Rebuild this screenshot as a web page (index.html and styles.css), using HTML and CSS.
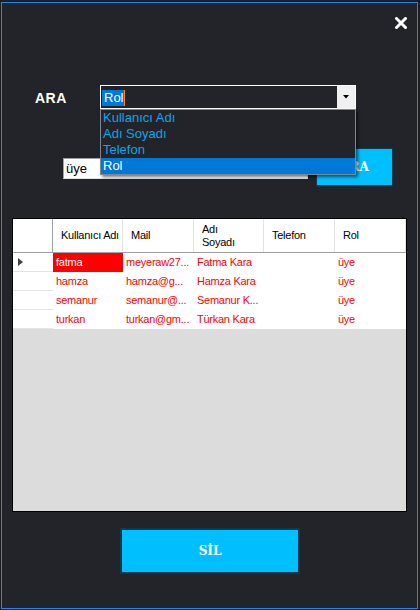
FILE: index.html
```html
<!DOCTYPE html>
<html lang="tr">
<head>
<meta charset="utf-8">
<title>Kullanıcı Ara</title>
<link rel="stylesheet" href="styles.css">
</head>
<body>
<div class="window">
  <div class="topbar">
    <button class="close" aria-label="Kapat">
      <svg width="12" height="12" viewBox="0 0 12 12"><path d="M1.5 1.5 L10.5 10.5 M10.5 1.5 L1.5 10.5" stroke="#fff" stroke-width="3" stroke-linecap="square" fill="none"/></svg>
    </button>
  </div>

  <div class="search-row">
    <span class="search-label">ARA</span>
    <div class="combo">
      <div class="combo-field"><span class="combo-value">Rol</span></div>
      <div class="combo-btn"><svg width="6" height="4" viewBox="0 0 6 4"><path d="M0 0 H6 L3 3.5 Z" fill="#000"/></svg></div>
      <ul class="combo-list">
        <li>Kullanıcı Adı</li>
        <li>Adı Soyadı</li>
        <li>Telefon</li>
        <li class="selected">Rol</li>
      </ul>
    </div>
  </div>

  <div class="filter-row">
    <div class="textbox">üye</div>
    <button class="btn btn-ara">ARA</button>
  </div>

  <div class="grid">
    <div class="grid-head">
      <div class="rh"></div>
      <div class="hc">Kullanıcı Adı</div>
      <div class="hc">Mail</div>
      <div class="hc two">Adı<br>Soyadı</div>
      <div class="hc">Telefon</div>
      <div class="hc">Rol</div>
    </div>
    <div class="grid-row current">
      <div class="rh"><span class="arrow"></span></div>
      <div class="dc sel">fatma</div>
      <div class="dc">meyeraw27...</div>
      <div class="dc">Fatma Kara</div>
      <div class="dc"></div>
      <div class="dc">üye</div>
    </div>
    <div class="grid-row">
      <div class="rh"></div>
      <div class="dc">hamza</div>
      <div class="dc">hamza@g...</div>
      <div class="dc">Hamza Kara</div>
      <div class="dc"></div>
      <div class="dc">üye</div>
    </div>
    <div class="grid-row">
      <div class="rh"></div>
      <div class="dc">semanur</div>
      <div class="dc">semanur@...</div>
      <div class="dc">Semanur K...</div>
      <div class="dc"></div>
      <div class="dc">üye</div>
    </div>
    <div class="grid-row">
      <div class="rh"></div>
      <div class="dc">turkan</div>
      <div class="dc">turkan@gm...</div>
      <div class="dc">Türkan Kara</div>
      <div class="dc"></div>
      <div class="dc">üye</div>
    </div>
  </div>

  <div class="bottom">
    <button class="btn btn-sil">SİL</button>
  </div>
</div>
</body>
</html>
```

FILE: styles.css
```css
* { box-sizing: border-box; }

html, body {
  margin: 0;
  padding: 0;
  background: #1d1e22;
  font-family: "Liberation Sans", Arial, sans-serif;
}

.window {
  margin: 2px 0 0 1px;
  width: 417px;
  height: 607px;
  border: 1px solid #1e88f0;
  background: #222429;
}

.topbar {
  height: 40px;
  display: flex;
  justify-content: flex-end;
  padding: 14px 10px 0 0;
}

.close {
  width: 12px;
  height: 12px;
  padding: 0;
  border: 0;
  background: none;
  display: block;
}
.close svg { display: block; }

.search-row {
  margin-top: 42px;
  padding-left: 33px;
  display: flex;
  align-items: center;
  height: 24px;
}

.search-label {
  width: 65px;
  color: #fff;
  font-weight: bold;
  font-size: 14px;
  letter-spacing: 0.5px;
  padding-top: 2px;
}

.combo {
  position: relative;
  width: 256px;
  height: 24px;
  border: 1px solid #ffffff;
  display: flex;
  background: #222429;
}

.combo-field {
  flex: 1;
  padding: 2px 0 0 1px;
}

.combo-value {
  display: inline-block;
  background: #0078d7;
  color: #fff;
  font-size: 13px;
  line-height: 16px;
  padding: 0 0 0 2px;
  border-right: 1px solid #ff8c1a;
}

.combo-btn {
  width: 18px;
  background: #f0f0f0;
  display: flex;
  align-items: center;
  justify-content: center;
}
.combo-btn svg { display: block; }

.combo-list {
  position: absolute;
  top: 23px;
  left: -1px;
  width: 256px;
  height: 66px;
  margin: 0;
  padding: 0;
  list-style: none;
  border: 1px solid #82868e;
  background: #222429;
  box-shadow: 2px 2px 3px rgba(0, 0, 0, 0.55);
  z-index: 5;
}

.combo-list li {
  height: 16px;
  line-height: 16px;
  padding-left: 2px;
  font-size: 13px;
  color: #0aa6ee;
}

.combo-list li.selected {
  background: #0078d7;
  color: #fff;
}

.filter-row {
  margin-top: 39px;
  padding-left: 61px;
  display: flex;
  align-items: flex-start;
  gap: 8px;
}

.textbox {
  margin-top: 10px;
  width: 245px;
  height: 21px;
  background: #fff;
  border: 1px solid #a0a0a0;
  border-right-color: #e3e3e3;
  border-bottom-color: #e3e3e3;
  padding-left: 2px;
  font-size: 13px;
  line-height: 19px;
  color: #000;
}

.btn {
  background: #00bfff;
  color: #fff;
  font-family: "DejaVu Serif", "Liberation Serif", serif;
  font-weight: bold;
  font-size: 12px;
  padding: 0;
  cursor: pointer;
}

.btn-ara {
  width: 77px;
  height: 38px;
  border: 1px solid #0d3d56;
}

.grid {
  margin: 32px 0 0 10px;
  width: 395px;
  height: 294px;
  border: 1px solid #000;
  background: #dcdcdc;
  font-size: 11px;
  letter-spacing: -0.25px;
}

.grid-head,
.grid-row {
  display: grid;
  grid-template-columns: 40px 70px 71px 70px 71px 71px;
}

.grid-head {
  height: 34px;
  background: #fff;
  border-bottom: 1px solid #a0a0a0;
}

.grid-head .rh {
  border-right: 1px solid #a0a0a0;
}

.hc {
  border-right: 1px solid #e3e3e3;
  padding-left: 8px;
  display: flex;
  align-items: center;
  color: #000;
  line-height: 13px;
}

.grid-row {
  height: 19px;
  background: #fff;
}

.grid-row .rh {
  border-bottom: 1px solid #e3e3e3;
  display: flex;
  align-items: center;
  padding-left: 5px;
}

.arrow {
  width: 0;
  height: 0;
  border-top: 4px solid transparent;
  border-bottom: 4px solid transparent;
  border-left: 5px solid #404040;
}

.dc {
  color: #ff0000;
  padding-left: 3px;
  line-height: 19px;
  white-space: nowrap;
  overflow: hidden;
}

.dc.sel {
  background: #ff0000;
  color: #fff;
}

.bottom {
  margin-top: 16px;
  display: flex;
  justify-content: center;
  padding-left: 1px;
}

.btn-sil {
  width: 180px;
  height: 46px;
  border: 2px solid #0b3a50;
}
```
